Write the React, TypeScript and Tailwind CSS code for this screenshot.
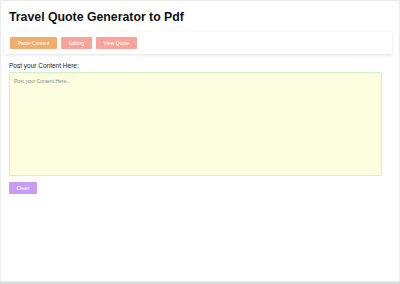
export default function App() {
  return (
    <div className="w-[400px] h-[284px] flex flex-col bg-white" style={{ fontFamily: '"Liberation Sans", Arial, sans-serif' }}>
      <div className="flex-1 border border-[#ececec] flex flex-col px-[7px]">
        <h1 className="text-[12.3px] font-bold text-[#111] mt-[9px] leading-[15px] pl-px">Travel Quote Generator to Pdf</h1>
        <div className="mt-[7px] -ml-[4px] mr-[0px] h-[22px] bg-white shadow-[0_1px_3px_rgba(0,0,0,0.12)] flex items-center gap-[4px] px-[6px]">
          <button className="h-[12px] w-[47px] rounded-[1px] bg-[#f0ad6c] text-white text-[5px] leading-none">Paste Content</button>
          <button className="h-[12px] w-[31px] rounded-[1px] bg-[#f8a39b] text-white text-[5px] leading-none">Editing</button>
          <button className="h-[12px] w-[41px] rounded-[1px] bg-[#f8a39b] text-white text-[5px] leading-none">View Quote</button>
        </div>
        <div className="mt-[8px] text-[6.5px] text-[#222] leading-[8px] pl-px">Post your Content Here:</div>
        <textarea
          className="block mt-[2px] ml-px w-[373px] h-[104px] bg-[#fdfee0] border border-[#c8f7c4] rounded-[1px] text-[5px] px-[4px] py-[5px] text-[#555] placeholder:text-[#888] outline-none resize-none"
          placeholder="Post your Content Here..."
        />
        <div className="mt-[6px] pl-px">
          <button className="block h-[12px] w-[28px] rounded-[1px] bg-[#c59ef3] text-white text-[5px] leading-none">Clean</button>
        </div>
      </div>
      <div className="h-[2px] bg-[#d6dfe0]" />
    </div>
  );
}
